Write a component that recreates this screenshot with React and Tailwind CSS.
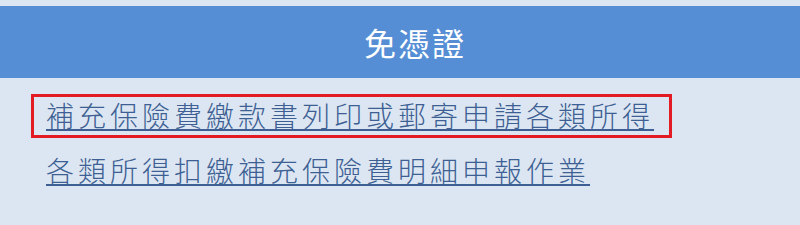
export default function App() {
  const links = [
    { text: '補充保險費繳款書列印或郵寄申請各類所得', active: true },
    { text: '各類所得扣繳補充保險費明細申報作業', active: false },
  ];

  return (
    <div
      className="w-[800px] h-[225px] overflow-hidden bg-[#dce6f2] pt-[6px]"
      style={{ fontFamily: '"Noto Sans CJK TC", "Noto Sans CJK SC", sans-serif' }}
    >
      <div className="h-[72px] bg-[#558ed5] flex items-center justify-center pl-[30px]">
        <h2 className="text-white text-[32px] font-normal tracking-[2px]">免憑證</h2>
      </div>
      <ul className="pt-[16px] pl-[31px] flex flex-col items-start gap-[11px]">
        {links.map((l) => (
          <li key={l.text}>
            <a
              href="#"
              className={
                'block h-[44px] pl-[12px] pr-[15px] border-[3px] text-[28px] leading-[36px] tracking-[4px] font-light text-[#3d5f93] underline decoration-[1.5px] underline-offset-[2px] ' +
                (l.active ? 'border-[#e31b23]' : 'border-transparent')
              }
            >
              {l.text}
            </a>
          </li>
        ))}
      </ul>
    </div>
  );
}
